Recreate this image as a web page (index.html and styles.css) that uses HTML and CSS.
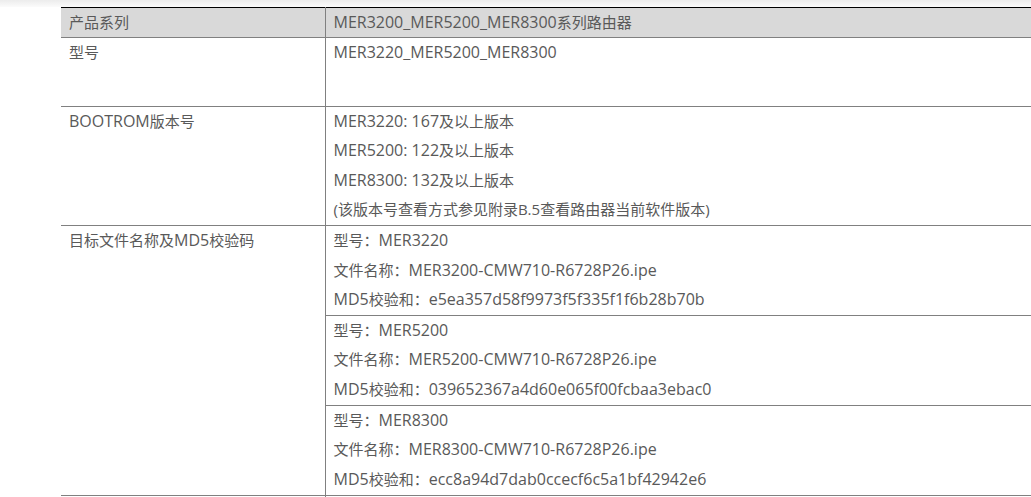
FILE: index.html
```html
<!DOCTYPE html>
<html lang="zh-CN">
<head>
<meta charset="utf-8">
<title>MER系列路由器版本信息</title>
<link rel="stylesheet" href="styles.css">
</head>
<body>
<div class="topshade"></div>
<table class="spec">
  <colgroup><col class="c1"><col class="c2"></colgroup>
  <thead>
    <tr><th>产品系列</th><th><span class="en">MER3200_MER5200_MER8300</span>系列路由器</th></tr>
  </thead>
  <tbody>
    <tr class="tall">
      <td><p>型号</p></td>
      <td><p><span class="en">MER3220_MER5200_MER8300</span></p></td>
    </tr>
    <tr>
      <td><p><span class="en">BOOTROM</span>版本号</p></td>
      <td>
        <p><span class="en">MER3220: 167</span>及以上版本</p>
        <p><span class="en">MER5200: 122</span>及以上版本</p>
        <p><span class="en">MER8300: 132</span>及以上版本</p>
        <p>(该版本号查看方式参见附录B.5查看路由器当前软件版本)</p>
      </td>
    </tr>
    <tr>
      <td rowspan="3"><p>目标文件名称及<span class="en">MD5</span>校验码</p></td>
      <td>
        <p>型号：<span class="en">MER3220</span></p>
        <p>文件名称：<span class="en">MER3200-CMW710-R6728P26.ipe</span></p>
        <p><span class="en">MD5</span>校验和：<span class="en">e5ea357d58f9973f5f335f1f6b28b70b</span></p>
      </td>
    </tr>
    <tr>
      <td>
        <p>型号：<span class="en">MER5200</span></p>
        <p>文件名称：<span class="en">MER5200-CMW710-R6728P26.ipe</span></p>
        <p><span class="en">MD5</span>校验和：<span class="en">039652367a4d60e065f00fcbaa3ebac0</span></p>
      </td>
    </tr>
    <tr>
      <td>
        <p>型号：<span class="en">MER8300</span></p>
        <p>文件名称：<span class="en">MER8300-CMW710-R6728P26.ipe</span></p>
        <p><span class="en">MD5</span>校验和：<span class="en">ecc8a94d7dab0ccecf6c5a1bf42942e6</span></p>
      </td>
    </tr>
    <tr class="next">
      <td><p>&nbsp;</p></td>
      <td><p>&nbsp;</p></td>
    </tr>
  </tbody>
</table>
</body>
</html>
```

FILE: styles.css
```css
html, body {
  margin: 0;
  padding: 0;
  background: #ffffff;
}

body {
  font-family: "Open Sans", "Noto Sans CJK SC", sans-serif;
  font-size: 15px;
  color: #595959;
  overflow: hidden;
}

.topshade {
  height: 7px;
  background: linear-gradient(#ececec, #fbfbfb);
}

.spec {
  margin-left: 61px;
  width: 970px;
  border-collapse: collapse;
  table-layout: fixed;
  border-top: 1px solid #000000;
}

.spec col.c1 {
  width: 264px;
}

.spec th,
.spec td {
  text-align: left;
  vertical-align: top;
  font-weight: normal;
  padding: 3px 8px 5px;
  border-bottom: 1px solid #808080;
  border-left: 1px solid #808080;
}

.spec th:first-child,
.spec tr > td:first-child[rowspan],
.spec tr:not(:has(td[rowspan])) > td:first-child {
  border-left: none;
}

.spec tbody tr:has(td[rowspan]) ~ tr:not(.next) > td:first-child {
  border-left: 1px solid #808080;
}

.spec thead th {
  background: #d9d9d9;
  padding: 3px 8px 4px;
  line-height: 22px;
}

.spec p {
  margin: 0;
  line-height: 22px;
  white-space: nowrap;
}

.spec p + p {
  margin-top: 7.4px;
}

.spec .en {
  font-size: 16px;
}

.spec tr.tall td {
  height: 60px;
}
```
